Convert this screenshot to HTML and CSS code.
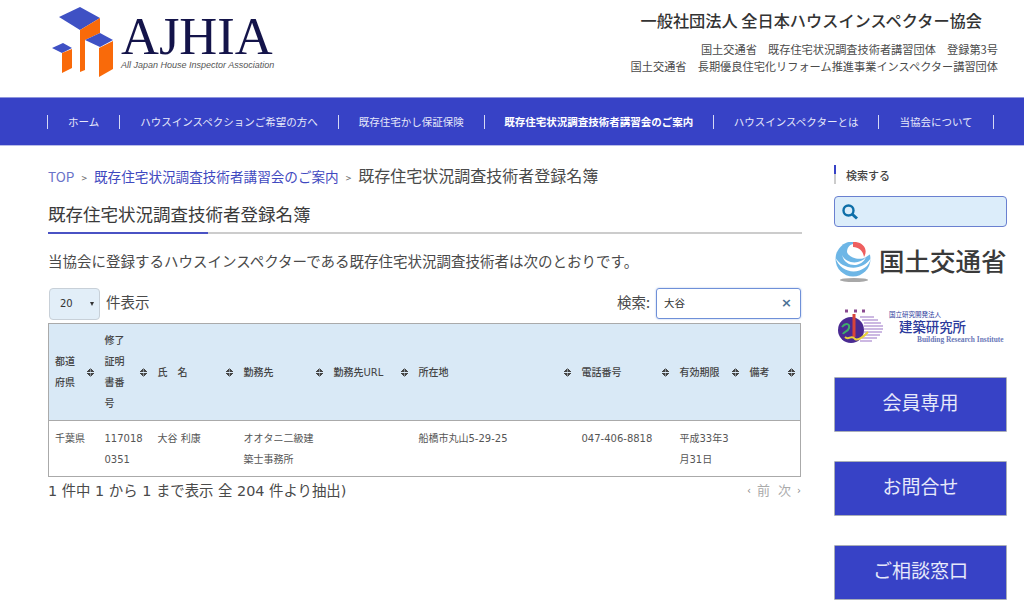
FILE: index.html
```html
<!DOCTYPE html>
<html lang="ja">
<head>
    <meta charset="utf-8">
    <title>既存住宅状況調査技術者登録名簿</title>
    <link rel="stylesheet" href="styles.css">
</head>
<body>

    <header class="top">
        <div class="logo">
            <svg class="logoMark" width="64" height="72" viewBox="0 0 64 72">
                <polygon points="7,10 28,0 48,11 28,23" fill="#3f51c4"/>
                <polygon points="28,23 48,11 48,26 33,33 33,63 28,65" fill="#f96a0a"/>
                <polygon points="33,33 48,26 61,33 48,40" fill="#3f51c4"/>
                <polygon points="47,41 61,34 61,62 47,70" fill="#f96a0a"/>
                <polygon points="0,41 11,36 20,41 10,46" fill="#3f51c4"/>
                <polygon points="10,46 20,42 20,61 10,66" fill="#f96a0a"/>
            </svg>
            <div class="logoText">
                <div class="logoName">AJHIA</div>
                <div class="logoSub">All Japan House Inspector Association</div>
            </div>
        </div>
        <div class="org">
            <div class="orgName">一般社団法人 全日本ハウスインスペクター協会</div>
            <p>国土交通省　既存住宅状況調査技術者講習団体　登録第3号</p>
            <p>国土交通省　長期優良住宅化リフォーム推進事業インスペクター講習団体</p>
        </div>
    </header>

    <nav class="nav">
        <a href="#">ホーム</a>
        <a href="#">ハウスインスペクションご希望の方へ</a>
        <a href="#">既存住宅かし保証保険</a>
        <a href="#" class="current">既存住宅状況調査技術者講習会のご案内</a>
        <a href="#">ハウスインスペクターとは</a>
        <a href="#">当協会について</a>
    </nav>

    <div class="wrap">
        <main class="main">
            <div class="crumbs">
                <a href="#">TOP</a><span class="sep">&gt;</span><a href="#" class="crumbLink">既存住宅状況調査技術者講習会のご案内</a><span class="sep">&gt;</span><span class="crumbNow">既存住宅状況調査技術者登録名簿</span>
            </div>

            <h1>既存住宅状況調査技術者登録名簿</h1>

            <p class="lead">当協会に登録するハウスインスペクターである既存住宅状況調査技術者は次のとおりです。</p>

            <div class="tools">
                <div class="len">
                    <div class="lenBox">20<span class="arrow"></span></div>
                    件表示
                </div>
                <div class="find">
                    検索:
                    <div class="findBox">大谷<span class="clear">×</span></div>
                </div>
            </div>

            <table class="list">
                <colgroup>
                    <col class="c1"><col class="c2"><col class="c3"><col class="c4"><col class="c5">
                    <col class="c6"><col class="c7"><col class="c8"><col class="c9">
                </colgroup>
                <thead>
                    <tr>
                        <th>都道<br>府県</th>
                        <th>修了<br>証明<br>書番<br>号</th>
                        <th>氏　名</th>
                        <th>勤務先</th>
                        <th>勤務先URL</th>
                        <th>所在地</th>
                        <th>電話番号</th>
                        <th>有効期限</th>
                        <th>備考</th>
                    </tr>
                </thead>
                <tbody>
                    <tr>
                        <td>千葉県</td>
                        <td>117018<br>0351</td>
                        <td>大谷 利康</td>
                        <td>オオタニ二級建<br>築士事務所</td>
                        <td></td>
                        <td>船橋市丸山5-29-25</td>
                        <td>047-406-8818</td>
                        <td>平成33年3<br>月31日</td>
                        <td></td>
                    </tr>
                </tbody>
            </table>

            <div class="foot">
                <div>1 件中 1 から 1 まで表示 全 204 件より抽出)</div>
                <div class="pager"><span class="tick">‹</span><span>前</span><span>次</span><span class="tick">›</span></div>
            </div>
        </main>

        <aside class="side">
            <div class="sideTitle">検索する</div>
            <div class="sideSearch">
                <svg width="18" height="18" viewBox="0 0 18 18">
                    <circle cx="7.5" cy="7.5" r="5" fill="none" stroke="#0f6fa8" stroke-width="2.4"/>
                    <line x1="11" y1="11" x2="16" y2="15.5" stroke="#0f6fa8" stroke-width="3"/>
                </svg>
            </div>

            <div class="mlit">
                <svg width="38" height="41" viewBox="0 0 38 41">
                    <circle cx="19" cy="17" r="17.5" fill="#6db6e6"/>
                    <path d="M1 15 C8 28 28 30 37 16 C34 32 8 36 1 15Z" fill="#fff"/>
                    <path d="M8 13 C12 22 26 23 32 15 C28 26 11 26 8 13Z" fill="#fff"/>
                    <path d="M19 -1 H38 V11 L32 15 C26 19 15 16 13 10 C13 6 15 3 19 2Z" fill="#fff"/>
                    <path d="M19 0 C28 -1 35 7 30 15 C29 9 25 5 19 5Z" fill="#ee5f5f"/>
                    <ellipse cx="20" cy="38" rx="14" ry="2" fill="#a8a8a8"/>
                </svg>
                <span>国土交通省</span>
            </div>

            <div class="bri">
                <svg width="49" height="40" viewBox="0 0 49 40">
                    <g fill="none" stroke="#b79ad6" stroke-width="1.4">
                        <path d="M24 11 H38"/><path d="M26 14 H42"/><path d="M28 17 H45"/><path d="M28 20 H47"/>
                        <path d="M28 23 H47"/><path d="M28 26 H46"/><path d="M28 29 H44"/><path d="M26 32 H41"/><path d="M24 35 H36"/>
                    </g>
                    <circle cx="15" cy="24" r="13" fill="#4a2a92"/>
                    <path d="M6 21 C10 16 14 18 13 22 C12 26 8 25 7 28" fill="none" stroke="#3fae6a" stroke-width="2"/>
                    <path d="M18 8 V31" stroke="#d8443a" stroke-width="3"/>
                    <path d="M9 31 C13 35 15 28 19 33 C23 35 28 30 32 26" fill="none" stroke="#e8d23a" stroke-width="2"/>
                    <path d="M9 5 h3 M18 5 h3 M26 5 h3" stroke="#8a4a90" stroke-width="3"/>
                </svg>
                <div class="briText">
                    <div class="briSmall">国立研究開発法人</div>
                    <div class="briName">建築研究所</div>
                    <div class="briEn">Building Research Institute</div>
                </div>
            </div>

            <a href="#" class="sideBtn">会員専用</a>
            <a href="#" class="sideBtn">お問合せ</a>
            <a href="#" class="sideBtn">ご相談窓口</a>
        </aside>
    </div>

</body>
</html>
```

FILE: styles.css
```css
html, body {
    margin: 0;
    height: 607px;
    overflow: hidden;
}

body {
    background-color: white;
    color: #4a4a4a;
    font-family: "Noto Sans CJK JP", "Noto Sans", sans-serif;
}

a {
    text-decoration: none;
    color: inherit;
}

.top {
    height: 97px;
    display: flex;
    justify-content: space-between;
    padding: 0 26px 0 52px;
}

.logo {
    display: flex;
    padding-top: 7px;
    gap: 5px;
    height: 72px;
}

.logoText {
    padding-top: 7px;
}

.logoName {
    font-family: "Liberation Serif", serif;
    font-size: 52.5px;
    line-height: 44px;
    color: #14144a;
}

.logoSub {
    font-family: "Liberation Sans", sans-serif;
    font-style: italic;
    font-size: 9px;
    line-height: 10px;
    margin-top: 2px;
    color: #555;
}

.org {
    text-align: right;
    padding-top: 9px;
    font-size: 11.2px;
    line-height: 17px;
}

.orgName {
    font-size: 16.2px;
    line-height: 22px;
    font-weight: 500;
    color: #333;
    margin-bottom: 10px;
    padding-right: 16px;
}

.org p {
    margin: 0;
}

.nav {
    height: 49px;
    box-sizing: border-box;
    background-color: #3742c6;
    border-top: 1px solid #8f96dd;
    border-bottom: 1px solid #b9bde8;
    display: flex;
    align-items: center;
    padding-left: 47px;
    font-size: 10.5px;
    color: #e6e8fa;
}

.nav a {
    border-left: 1px solid #d5d8f5;
    height: 14px;
    line-height: 14px;
    padding: 0 20px;
    white-space: nowrap;
}

.nav a:last-child {
    border-right: 1px solid #d5d8f5;
}

.nav .current {
    font-weight: 700;
    color: white;
    padding: 0 19.5px;
}

.wrap {
    display: flex;
    padding: 0 17px 0 48px;
    gap: 32px;
}

.main {
    width: 754px;
    flex: none;
}

.crumbs {
    margin-top: 19px;
    font-size: 13.6px;
    line-height: 20px;
    white-space: nowrap;
}

.crumbs a {
    color: #6a73c9;
}

.crumbs .crumbLink {
    color: #3f49c0;
}

.crumbNow {
    font-size: 16px;
}

.sep {
    font-size: 10px;
    margin: 0 7px;
    color: #666;
}

h1 {
    margin: 15px 0 0;
    font-size: 17.5px;
    line-height: 22px;
    font-weight: 400;
    color: #3a3a3a;
    padding-bottom: 7px;
    border-bottom: 2px solid #ccc;
    position: relative;
}

h1::after {
    content: "";
    position: absolute;
    left: 0;
    bottom: -2px;
    width: 160px;
    height: 2px;
    background-color: #4a52c4;
}

.lead {
    margin: 17px 0 0;
    font-size: 14.5px;
    line-height: 20px;
    white-space: nowrap;
}

.tools {
    display: flex;
    justify-content: space-between;
    margin-top: 17px;
    padding-right: 1px;
    height: 33px;
    font-size: 14.5px;
    line-height: 28px;
}

.len, .find {
    display: flex;
    align-items: flex-start;
}

.lenBox {
    width: 51px;
    height: 32px;
    box-sizing: border-box;
    margin: 0 6px 0 1px;
    padding: 0 5px 0 10px;
    display: flex;
    align-items: center;
    justify-content: space-between;
    font-family: "DejaVu Sans", sans-serif;
    font-size: 10px;
    color: #333;
    background-color: #e2eef8;
    border: 1px solid #c8d0d8;
    border-radius: 4px;
}

.arrow {
    border-top: 4px solid #333;
    border-left: 2.5px solid transparent;
    border-right: 2.5px solid transparent;
}

.findBox {
    width: 145px;
    height: 31px;
    box-sizing: border-box;
    margin-left: 6px;
    padding: 0 8px 2px 7px;
    display: flex;
    align-items: center;
    justify-content: space-between;
    font-size: 10.5px;
    color: #333;
    border: 1px solid #6f90d8;
    border-radius: 3px;
    box-shadow: 0 0 2px #a9bfe8;
}

.clear {
    font-family: "DejaVu Sans", sans-serif;
    font-size: 13px;
    font-weight: 700;
    color: #4a7295;
}

.list {
    width: 752px;
    table-layout: fixed;
    border-collapse: collapse;
    font-family: "DejaVu Sans", "Noto Sans CJK JP", sans-serif;
    font-size: 10px;
    line-height: 21px;
    margin-top: 2px;
    border: 1px solid #aaa;
    color: #555;
}

.c1 { width: 50px; }
.c2 { width: 53px; }
.c3 { width: 86px; }
.c4 { width: 90px; }
.c5 { width: 85px; }
.c6 { width: 163px; }
.c7 { width: 98px; }
.c8 { width: 70px; }
.c9 { width: 57px; }

.list th {
    height: 96px;
    padding: 0 6px;
    font-weight: 500;
    text-align: left;
    background-color: #d9e9f6;
    border-bottom: 1px solid #aaa;
    position: relative;
    color: #444;
}

.list th::after {
    content: "";
    position: absolute;
    right: 5px;
    top: 50%;
    margin-top: -4px;
    width: 7px;
    height: 9px;
    background:
        linear-gradient(to top right, transparent 50%, #444 50%) left bottom / 50% 4px no-repeat,
        linear-gradient(to top left, transparent 50%, #444 50%) right bottom / 50% 4px no-repeat,
        linear-gradient(to bottom right, transparent 50%, #444 50%) left top / 50% 4px no-repeat,
        linear-gradient(to bottom left, transparent 50%, #444 50%) right top / 50% 4px no-repeat;
    transform: rotate(180deg);
}

.list td {
    padding: 7px 6px 6px;
    vertical-align: top;
    word-break: break-all;
}

.foot {
    display: flex;
    justify-content: space-between;
    font-family: "DejaVu Sans", "Noto Sans CJK JP", sans-serif;
    font-size: 14.4px;
    line-height: 20px;
    margin-top: 4px;
}

.pager {
    display: flex;
    gap: 8px;
    align-items: center;
    font-size: 13px;
    color: #aaa;
    padding-right: 3px;
}

.tick {
    font-size: 10px;
    color: #888;
    margin: 0 -2px;
}

.side {
    width: 173px;
    flex: none;
    padding-top: 19px;
}

.sideTitle {
    font-size: 11px;
    line-height: 17px;
    padding-top: 2px;
    font-weight: 500;
    padding-left: 10px;
    color: #444;
    border-left: 2px solid #ccc;
    position: relative;
}

.sideTitle::before {
    content: "";
    position: absolute;
    left: -2px;
    top: 0;
    width: 2px;
    height: 9px;
    background-color: #3742c6;
}

.sideSearch {
    height: 31px;
    box-sizing: border-box;
    margin-top: 12px;
    padding: 5px 6px;
    background-color: #dcedfa;
    border: 1px solid #6a80d0;
    border-radius: 4px;
}

.mlit {
    display: flex;
    align-items: flex-start;
    gap: 7px;
    margin-top: 15px;
    height: 44px;
}

.mlit span {
    font-size: 25.5px;
    line-height: 36px;
    font-weight: 500;
    color: #3a3a3a;
    white-space: nowrap;
}

.bri {
    display: flex;
    margin-top: 20px;
    margin-left: 2px;
    height: 42px;
}

.briText {
    padding-left: 4px;
    color: #2c3a9c;
}

.briSmall {
    font-size: 6.5px;
    line-height: 8px;
    padding-top: 4px;
}

.briName {
    font-size: 13.4px;
    line-height: 17px;
    font-weight: 500;
    padding-left: 10px;
}

.briEn {
    font-family: "Liberation Serif", serif;
    font-size: 7.4px;
    line-height: 9px;
    font-weight: 700;
    padding-left: 28px;
    white-space: nowrap;
    color: #6a78b8;
}

.sideBtn {
    display: block;
    height: 55px;
    line-height: 48px;
    box-sizing: border-box;
    margin-top: 29px;
    text-align: center;
    font-size: 19px;
    color: #e6e8fa;
    background-color: #3742c6;
    border: 1px solid #a9aeb8;
    border-radius: 1px;
}
```
